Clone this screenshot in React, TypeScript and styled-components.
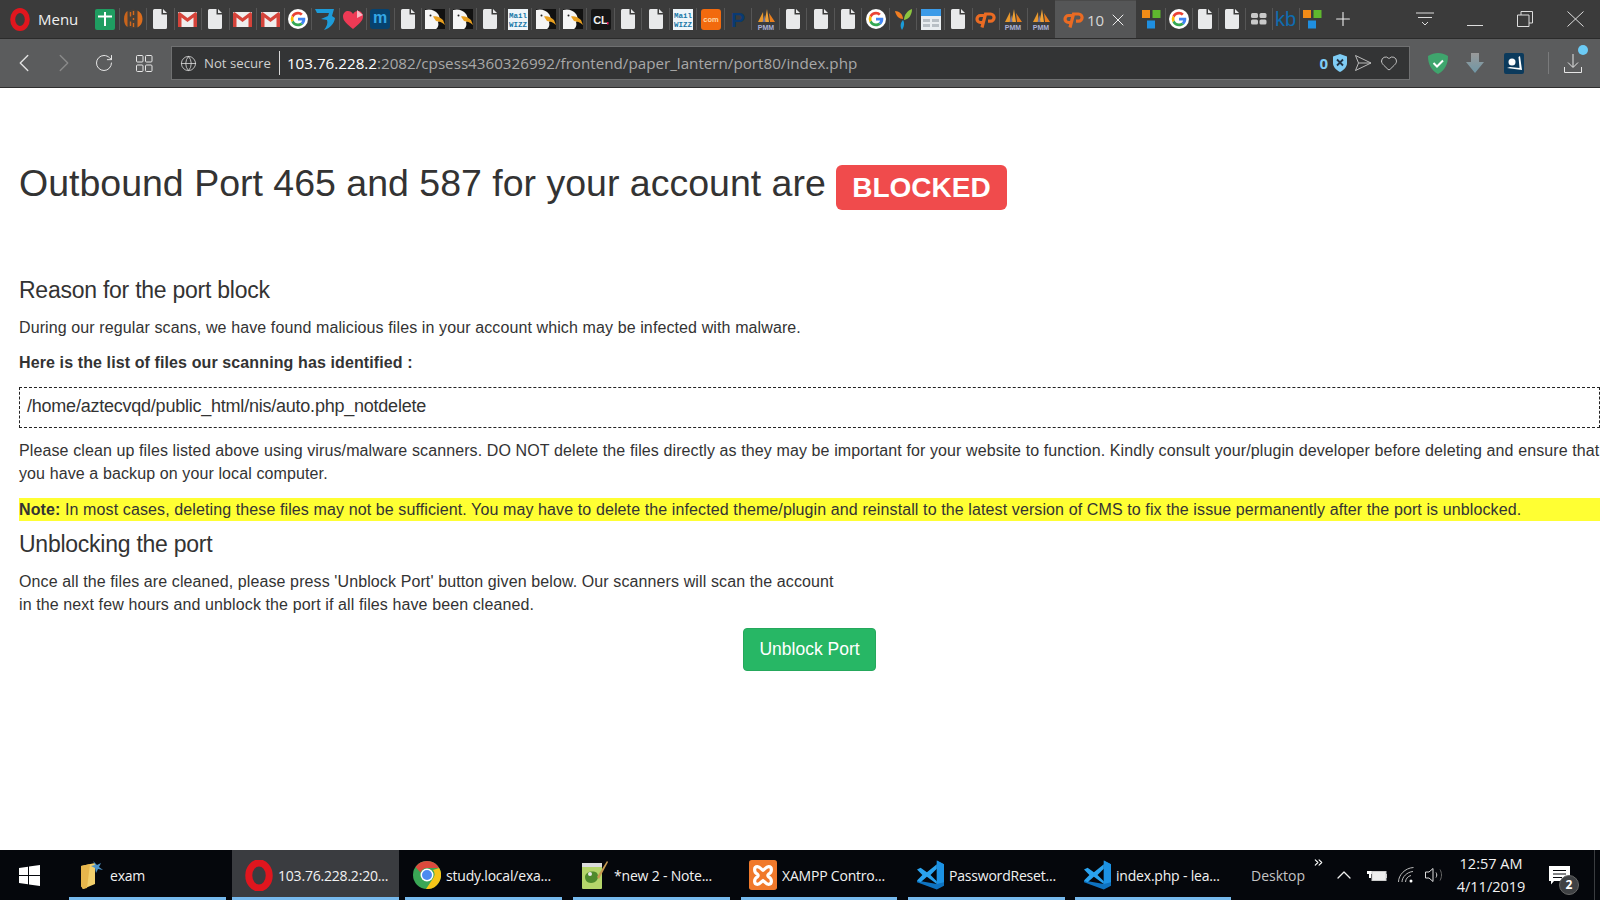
import * as React from 'react';
import styled, { createGlobalStyle } from 'styled-components';
import { ChevronLeft, ChevronRight, RotateCw, Globe, Heart, Plus, X, ChevronUp, ChevronsRight } from 'lucide-react';

type Fav =
  | 'plus' | 'orangeBars' | 'doc' | 'gmail' | 'google' | 'three' | 'heart' | 'm' | 'bird' | 'wizz'
  | 'cl' | 'com' | 'paypal' | 'pmm' | 'leaf' | 'calendar' | 'cpanel' | 'squares' | 'grid' | 'kb';

const leftBookmarks: Fav[] = [
  'plus', 'orangeBars', 'doc', 'gmail', 'doc', 'gmail', 'gmail', 'google', 'three', 'heart', 'm', 'doc', 'bird', 'bird',
  'doc', 'wizz', 'bird', 'bird', 'cl', 'doc', 'doc', 'wizz', 'com', 'paypal', 'pmm', 'doc', 'doc', 'doc', 'google',
  'leaf', 'calendar', 'doc', 'cpanel', 'pmm', 'pmm',
];
const rightBookmarks: Fav[] = ['squares', 'google', 'doc', 'doc', 'grid', 'kb', 'squares'];

const FavIcon = ({ kind }: { kind: Fav }) => {
  switch (kind) {
    case 'plus':
      return (
        <svg width="20" height="21" viewBox="0 0 20 21">
          <rect width="20" height="21" rx="2" fill="#1f9d61" />
          <path d="M3 7.5h14M10 3v14" stroke="#fff" strokeWidth="2" />
        </svg>
      );
    case 'orangeBars':
      return (
        <svg width="20" height="20" viewBox="0 0 20 20" fill="none">
          <ellipse cx="10" cy="10" rx="9" ry="9.500" fill="#4b4036" />
          <path d="M1 10C1 6 2.500 3 4.500 2V18C2.500 17 1 14 1 10Z" fill="#c9641c" />
          <path d="M14.500 1.500C17.500 3 19.500 6 19.500 10C19.500 14 17.500 17 14.500 18.500Z" fill="#dc6d1c" />
          <path d="M7.500 3V7.500M7.500 12.500V17M10.500 2V6M10.500 9V11M10.500 14V18" stroke="#d4691d" strokeWidth="1.400" />
        </svg>
      );
    case 'doc':
      return (
        <svg width="14" height="20" viewBox="0 0 14 20">
          <path d="M1.5 0H8.5V5.5H14V18.5A1.5 1.5 0 0 1 12.500 20H1.500A1.500 1.500 0 0 1 0 18.500V1.500A1.500 1.500 0 0 1 1.500 0ZM10 0L14 4H10Z" fill="#e8e9ea" />
        </svg>
      );
    case 'gmail':
      return (
        <svg width="19" height="15" viewBox="0 0 19 15">
          <rect width="19" height="15" rx="1" fill="#eeeeee" />
          <path d="M0 1.500V15H3.500V5.500L9.500 10L15.500 5.500V15H19V1.500L17.500 0L9.500 6L1.500 0Z" fill="#d5433a" />
        </svg>
      );
    case 'google':
      return (
        <svg width="20" height="20" viewBox="0 0 48 48">
          <circle cx="24" cy="24" r="24" fill="#fff" />
          <path fill="#ea4335" d="M24 13c3 0 5.300 1.100 7 2.700l4.500-4.500C32.500 8.500 28.700 6.500 24 6.500c-6.800 0-12.700 3.900-15.600 9.600l5.300 4.100C15 16 19.100 13 24 13z" />
          <path fill="#4285f4" d="M41.500 24.500c0-1.300-.1-2.500-.3-3.500H24v6.800h9.900c-.4 2.200-1.700 4.100-3.600 5.400l5.500 4.300c3.300-3 5.700-7.500 5.700-13z" />
          <path fill="#fbbc05" d="M13.700 27.800A10.500 10.500 0 0 1 13.700 20.200l-5.300-4.100a17.500 17.500 0 0 0 0 15.800z" />
          <path fill="#34a853" d="M24 41.500c4.700 0 8.700-1.500 11.800-4.300l-5.500-4.300c-1.600 1-3.700 1.700-6.300 1.700-4.900 0-9-3-10.300-7.200l-5.300 4.100c2.900 5.800 8.800 10 15.600 10z" />
        </svg>
      );
    case 'three':
      return (
        <svg width="20" height="21" viewBox="0 0 20 21">
          <path d="M0 0H19L17 7L20 9C19 15 15 19 9 21C12 17 13 14 12 11L6 10L13 7L14 4L2 4Z" fill="#1d9bd8" />
        </svg>
      );
    case 'heart':
      return (
        <svg width="20" height="19" viewBox="0 0 20 19">
          <path d="M10 19C4 14 0 11 0 6.500C0 3 2.500 1 5 1C7 1 9 2 10 4C11 2 13 1 15 1C17.500 1 20 3 20 6.500C20 11 16 14 10 19Z" fill="#ee3a55" />
          <path d="M14 0L20 5L14 8Z" fill="#f7b7c2" />
        </svg>
      );
    case 'm':
      return (
        <svg width="20" height="20" viewBox="0 0 20 20">
          <rect width="20" height="20" rx="3" fill="#07426e" />
          <text x="10" y="14" textAnchor="middle" fontFamily="Liberation Sans" fontWeight="700" fontSize="16" fill="#35a8e6">m</text>
        </svg>
      );
    case 'bird':
      return (
        <svg width="20" height="20" viewBox="0 0 20 20">
          <rect width="20" height="20" fill="#111" />
          <path d="M0 1C5 -0.500 10 1 13 5C15 8 15 11 13 13C14 16 13 19 11 20H0Z" fill="#f5f5f5" />
          <path d="M8 7.500C11 6.500 15 8 18 11L20 16C17 13 14 12.500 11 12Z" fill="#e8a020" />
          <circle cx="5.500" cy="6.500" r="1" fill="#222" />
        </svg>
      );
    case 'wizz':
      return (
        <svg width="20" height="21" viewBox="0 0 20 21">
          <rect width="20" height="21" fill="#eef5f9" />
          <text x="10" y="8.500" textAnchor="middle" fontFamily="Liberation Mono" fontWeight="700" fontSize="7.500" fill="#1878a8">Mail</text>
          <text x="10" y="18" textAnchor="middle" fontFamily="Liberation Mono" fontWeight="700" fontSize="7.500" fill="#1878a8">WIZZ</text>
        </svg>
      );
    case 'cl':
      return (
        <svg width="20" height="21" viewBox="0 0 20 21">
          <rect width="20" height="21" rx="2" fill="#151515" />
          <text x="9.500" y="15" textAnchor="middle" fontFamily="Liberation Sans" fontWeight="700" fontSize="11" fill="#f0f0f0">CL</text>
          <rect x="16" y="13" width="1.500" height="2.500" fill="#e8175d" />
        </svg>
      );
    case 'com':
      return (
        <svg width="20" height="21" viewBox="0 0 20 21">
          <rect width="20" height="21" rx="3" fill="#f26a0e" />
          <text x="10" y="13" textAnchor="middle" fontFamily="Liberation Sans" fontWeight="700" fontSize="7.500" fill="#ffd9a8">com</text>
        </svg>
      );
    case 'paypal':
      return (
        <svg width="18" height="26" viewBox="0 0 18 26">
          <text x="9" y="20.500" textAnchor="middle" fontFamily="Liberation Sans" fontWeight="700" fontSize="21" fill="#0a3a72">P</text>
        </svg>
      );
    case 'pmm':
      return (
        <svg width="20" height="21" viewBox="0 0 20 21">
          <path d="M2 13L7 3L7.500 13Z" fill="#e8982c" />
          <path d="M8.500 13L11 0L13 13Z" fill="#f0a236" />
          <path d="M14 13L13 4L19 13Z" fill="#ea7e1c" />
          <path d="M6.500 13L8.500 6L9.500 13Z" fill="#6f729a" />
          <text x="10" y="20.500" textAnchor="middle" fontFamily="Liberation Sans" fontWeight="700" fontSize="7" fill="#aab0d4">PMM</text>
        </svg>
      );
    case 'leaf':
      return (
        <svg width="17" height="21" viewBox="0 0 17 21">
          <path d="M0 2C4 2 8 5 8 10C4 10 1 7 0 2Z" fill="#ef7d22" />
          <path d="M17 0C17 6 14 10 9 11C9 6 12 2 17 0Z" fill="#8cc63f" />
          <path d="M8 11C10 14 9 18 7 21C5 18 5 14 8 11Z" fill="#1b9bd7" />
        </svg>
      );
    case 'calendar':
      return (
        <svg width="20" height="21" viewBox="0 0 20 21">
          <rect width="20" height="21" fill="#e9edf0" />
          <rect width="20" height="7" fill="#3b9be8" />
          <path d="M2 10h7v3H2zM11 10h7v3h-7zM2 15h7v3H2zM11 15h7v3h-7z" fill="#b8bfc5" />
        </svg>
      );
    case 'cpanel':
      return (
        <svg width="21" height="17" viewBox="0 0 21 17" fill="none" stroke="#ea6b23" strokeWidth="3.200">
          <path d="M9 4.500H5.500A3.500 3.500 0 0 0 5.500 11.500H7.500" />
          <path d="M7 16.500L10.500 3H15.500A3.600 3.600 0 0 1 15.500 10.200H13" />
        </svg>
      );
    case 'squares':
      return (
        <svg width="19" height="19" viewBox="0 0 19 19">
          <rect width="8" height="8" fill="#f28c17" />
          <rect x="10.500" width="8" height="8" fill="#5fb82e" />
          <rect x="5" y="10.500" width="8" height="8" fill="#1f8fe0" />
        </svg>
      );
    case 'grid':
      return (
        <svg width="16" height="12" viewBox="0 0 16 12">
          <rect width="7" height="5" rx="1.500" fill="#c9c9c9" />
          <rect x="8.500" width="7" height="5" rx="1.500" fill="#c9c9c9" />
          <rect y="6.500" width="7" height="5" rx="1.500" fill="#c9c9c9" />
          <rect x="8.500" y="6.500" width="7" height="5" rx="1.500" fill="#c9c9c9" />
        </svg>
      );
    case 'kb':
      return (
        <svg width="21" height="20" viewBox="0 0 21 20">
          <text x="10.500" y="17" textAnchor="middle" fontFamily="Liberation Sans" fontSize="20" fill="#0f6cb0">kb</text>
        </svg>
      );
  }
};

const OperaIcon = ({ size, w }: { size: number; w: number }) => (
  <svg width={w} height={size} viewBox="0 0 20 22">
    <ellipse cx="10" cy="11" rx="7.300" ry="9" fill="none" stroke="#e0161e" strokeWidth="5" />
  </svg>
);

const WindowsIcon = () => (
  <svg width="21" height="21" viewBox="0 0 21 21">
    <path d="M0 3L9 1.700V10H0ZM10 1.500L21 0V10H10ZM0 11H9V19.300L0 18ZM10 11H21V21L10 19.500Z" fill="#fff" />
  </svg>
);

const FolderIcon = () => (
  <svg width="26" height="30" viewBox="0 0 26 30">
    <path d="M3 6L17 3V24L5 29L3 26Z" fill="#f3cf6b" />
    <path d="M3 6L12 4L9 28L5 29L3 26Z" fill="#e7b64c" />
    <path d="M15 1L19 5L23 3L21 7L25 10L20 9L18 13L17 8L13 6L17 5Z" fill="#4d94c9" />
  </svg>
);

const ChromeIcon = () => (
  <svg width="28" height="28" viewBox="0 0 28 28">
    <circle cx="14" cy="14" r="14" fill="#3aa655" />
    <path d="M14 0A14 14 0 0 1 26.100 7H14A7 7 0 0 0 7.500 11.500L2.500 6A14 14 0 0 1 14 0Z" fill="#dc4a3d" />
    <path d="M26.100 7A14 14 0 0 1 13 28L20 17.500A7 7 0 0 0 20 9Z" fill="#f5c518" />
    <circle cx="14" cy="14" r="6.500" fill="#fff" />
    <circle cx="14" cy="14" r="5" fill="#4c8bf0" />
  </svg>
);

const NotepadIcon = () => (
  <svg width="28" height="30" viewBox="0 0 28 30">
    <rect x="1" y="5" width="20" height="24" rx="1" fill="#b5d56a" />
    <rect x="1" y="3" width="20" height="4" fill="#dcdcdc" />
    <path d="M4 17C4 12 12 10 16 13C19 18 15 23 10 23C6 23 4 20 4 17Z" fill="#4f8a2c" />
    <circle cx="9" cy="14" r="2" fill="#e8e8e8" />
    <path d="M16 17L26 1L27 2L18 19Z" fill="#c79a52" />
  </svg>
);

const XamppIcon = () => (
  <svg width="29" height="32" viewBox="0 0 30 32">
    <rect width="30" height="32" rx="3" fill="#f0792b" />
    <path d="M9 7C12 7 13 10 15 11C17 10 18 7 21 7C25 7 25 13 21 15C20 16 20 17 21 18C25 20 25 26 21 26C18 26 17 23 15 22C13 23 12 26 9 26C5 26 5 20 9 18C10 17 10 16 9 15C5 13 5 7 9 7Z" fill="none" stroke="#fff" strokeWidth="3.400" />
  </svg>
);

const VSCodeIcon = () => (
  <svg width="27" height="32" viewBox="0 0 30 32">
    <path d="M22 0L30 4V28L22 32L0 24V22L22 26Z" fill="#0e72bf" />
    <path d="M22 0V26L30 24V4Z" fill="#1c92e4" />
    <path d="M0 10L4 8L11 13L22 4V9L15 16L22 23V26L11 18L4 24L0 22L6 16Z" fill="#2aa3ef" />
  </svg>
);

const App = () => (
  <Screen>
    <GlobalStyle />
    <TabStrip>
      <MenuButton>
        <OperaIcon w={20} size={23} />
        <span>Menu</span>
      </MenuButton>
      <Bookmarks>
        {leftBookmarks.map((f, i) => (
          <Bookmark key={i}>
            <FavIcon kind={f} />
          </Bookmark>
        ))}
      </Bookmarks>
      <ActiveTab>
        <FavIcon kind="cpanel" />
        <TabCount>10</TabCount>
        <X size={20} strokeWidth={1.2} color="#eee" />
      </ActiveTab>
      <RightBookmarks>
        {rightBookmarks.map((f, i) => (
          <Bookmark key={i} $narrow>
            <FavIcon kind={f} />
          </Bookmark>
        ))}
      </RightBookmarks>
      <NewTab>
        <Plus size={22} strokeWidth={1.2} color="#eee" />
      </NewTab>
      <WindowControls>
        <WindowButton>
          <svg width="18" height="15" viewBox="0 0 18 15" fill="none" stroke="#ddd" strokeWidth="1">
            <path d="M0 1H18M2 5.500H16M6 10L9 13L12 10" />
          </svg>
        </WindowButton>
        <WindowButton>
          <svg width="16" height="14" viewBox="0 0 16 14" fill="none" stroke="#ddd" strokeWidth="1">
            <path d="M0 13.500H16" />
          </svg>
        </WindowButton>
        <WindowButton>
          <svg width="16" height="16" viewBox="0 0 16 16" fill="none" stroke="#ddd" strokeWidth="1">
            <path d="M4 4V.500H15.500V12H12M.500 4H12V15.500H.500Z" />
          </svg>
        </WindowButton>
        <WindowButton>
          <svg width="17" height="16" viewBox="0 0 17 16" fill="none" stroke="#ddd" strokeWidth="1">
            <path d="M.500 .500L16.500 15.500M16.500 .500L.500 15.500" />
          </svg>
        </WindowButton>
      </WindowControls>
    </TabStrip>

    <AddressRow>
      <NavButton>
        <ChevronLeft size={30} strokeWidth={1.1} color="#e2e2e2" />
      </NavButton>
      <NavButton>
        <ChevronRight size={30} strokeWidth={1.1} color="#8a8a8a" />
      </NavButton>
      <NavButton>
        <RotateCw size={20} strokeWidth={1.2} color="#e6e6e6" />
      </NavButton>
      <NavButton>
        <svg width="17" height="17" viewBox="0 0 17 17" fill="none" stroke="#e6e6e6" strokeWidth="1">
          <rect x=".5" y=".5" width="6.500" height="6.500" rx="1" />
          <rect x="9.500" y=".5" width="6.500" height="6.500" rx="1" />
          <rect x=".5" y="10" width="6.500" height="6.500" rx="1" />
          <rect x="9.500" y="10" width="6.500" height="6.500" rx="1" />
        </svg>
      </NavButton>
      <AddressBar>
        <Globe size={17} strokeWidth={1.1} color="#e0e0e0" />
        <NotSecure>Not secure</NotSecure>
        <UrlText>
          <b>103.76.228.2</b>:2082/cpsess4360326992/frontend/paper_lantern/port80/index.php
        </UrlText>
        <BlockCount>0</BlockCount>
        <svg width="14" height="18" viewBox="0 0 14 18">
          <path d="M7 0L14 2.500V9C14 13 11 16 7 18C3 16 0 13 0 9V2.500Z" fill="#7fcdf5" />
          <path d="M4 5.500L10 11.500M10 5.500L4 11.500" stroke="#234" strokeWidth="1.800" />
        </svg>
        <SendIcon width="17" height="16" viewBox="0 0 17 16" fill="none" stroke="#bbb" strokeWidth="1">
          <path d="M.500 .500L16 8L.500 15.500L3.500 8ZM3.500 8H16" />
        </SendIcon>
        <Heart size={18} strokeWidth={1.1} color="#ddd" />
      </AddressBar>
      <Extensions>
        <svg width="20" height="21" viewBox="0 0 20 21">
          <path d="M10 0C13 0 17 1 20 3C20 11 17 17 10 21C3 17 0 11 0 3C3 1 7 0 10 0Z" fill="#3fa56d" />
          <path d="M5.500 10L9 13.500L15 7.500" fill="none" stroke="#fff" strokeWidth="2" />
        </svg>
        <svg width="18" height="20" viewBox="0 0 18 20">
          <defs>
            <linearGradient id="arrowFade" x1="0" y1="0" x2="0" y2="1">
              <stop offset="0" stopColor="#9a9a9a" />
              <stop offset="1" stopColor="#6f97a6" />
            </linearGradient>
          </defs>
          <path d="M5 0H13V9H18L9 20L0 9H5Z" fill="url(#arrowFade)" />
        </svg>
        <BrandSquare width="20" height="21" viewBox="0 0 20 21">
          <rect width="20" height="21" rx="2" fill="#0b3a5c" />
          <path d="M16 3L18 17L3 15L6 14L15.500 15L14.500 4Z" fill="#fff" />
          <circle cx="8" cy="9" r="3.500" fill="#fff" />
        </BrandSquare>
        <ExtDivider />
        <DownloadSlot>
          <svg width="18" height="19" viewBox="0 0 18 19" fill="none" stroke="#e6e6e6" strokeWidth="1">
            <path d="M9 0V13M4 8.500L9 13.500L14 8.500M.500 13V18.500H17.500V13" />
          </svg>
          <DownloadDot />
        </DownloadSlot>
      </Extensions>
    </AddressRow>

    <Page>
      <Title>
        Outbound Port 465 and 587 for your account are <BlockedLabel>BLOCKED</BlockedLabel>
      </Title>
      <SectionHeading>Reason for the port block</SectionHeading>
      <Para>During our regular scans, we have found malicious files in your account which may be infected with malware.</Para>
      <Para>
        <strong>Here is the list of files our scanning has identified :</strong>
      </Para>
      <FileBox>/home/aztecvqd/public_html/nis/auto.php_notdelete</FileBox>
      <Para>
        Please clean up files listed above using virus/malware scanners. DO NOT delete the files directly as they may be
        important for your website to function. Kindly consult your/plugin developer before deleting and ensure that you
        have a backup on your local computer.
      </Para>
      <NoteLine>
        <strong>Note:</strong> In most cases, deleting these files may not be sufficient. You may have to delete the
        infected theme/plugin and reinstall to the latest version of CMS to fix the issue permanently after the port is
        unblocked.
      </NoteLine>
      <SecondHeading>Unblocking the port</SecondHeading>
      <Para>
        Once all the files are cleaned, please press 'Unblock Port' button given below. Our scanners will scan the account
        <br />
        in the next few hours and unblock the port if all files have been cleaned.
      </Para>
      <ButtonRow>
        <UnblockButton>Unblock Port</UnblockButton>
      </ButtonRow>
    </Page>

    <Taskbar>
      <StartButton>
        <WindowsIcon />
      </StartButton>
      <TaskItem $width={157} $gap={6}>
        <TaskIcon>
          <FolderIcon />
        </TaskIcon>
        <span>exam</span>
      </TaskItem>
      <TaskItem $width={167} $gap={6} $active>
        <TaskIcon>
          <OperaIcon w={29} size={31} />
        </TaskIcon>
        <span>103.76.228.2:20...</span>
      </TaskItem>
      <TaskItem $width={157} $gap={11}>
        <TaskIcon>
          <ChromeIcon />
        </TaskIcon>
        <span>study.local/exa...</span>
      </TaskItem>
      <TaskItem $width={157} $gap={11}>
        <TaskIcon>
          <NotepadIcon />
        </TaskIcon>
        <span>*new 2 - Note...</span>
      </TaskItem>
      <TaskItem $width={156} $gap={11}>
        <TaskIcon>
          <XamppIcon />
        </TaskIcon>
        <span>XAMPP Contro...</span>
      </TaskItem>
      <TaskItem $width={157} $gap={10}>
        <TaskIcon>
          <VSCodeIcon />
        </TaskIcon>
        <span>PasswordReset...</span>
      </TaskItem>
      <TaskItem $width={156} $gap={0}>
        <TaskIcon>
          <VSCodeIcon />
        </TaskIcon>
        <span>index.php - lea...</span>
      </TaskItem>
      <DesktopLabel>Desktop</DesktopLabel>
      <ToolbarChevrons>
        <ChevronsRight size={13} strokeWidth={2} color="#fff" />
      </ToolbarChevrons>
      <Tray>
        <ChevronUp size={24} strokeWidth={1.3} color="#f0f0f0" />
        <svg width="20" height="14" viewBox="0 0 20 14">
          <path d="M1 0H5M2 0V3M4 0V3M0 3H6V6H4V10H2V6H0Z" fill="#fff" />
          <rect x="5" y="3.500" width="14" height="9" fill="#eee" stroke="#ccc" strokeWidth="1" />
          <rect x="19" y="6" width="1.500" height="4" fill="#ccc" />
        </svg>
        <svg width="16" height="16" viewBox="0 0 16 16" fill="none" stroke="#bbb" strokeWidth="1">
          <path d="M.500 15C.500 8 7 1 15.500 .500M4 15C4 10 9 5 15 4.500M7.500 15C7.500 12 10 9 13 8.500" />
          <circle cx="13" cy="14" r="1.500" fill="#fff" stroke="none" />
        </svg>
        <svg width="20" height="16" viewBox="0 0 20 16" fill="none" stroke="#ddd" strokeWidth="1">
          <path d="M.500 5H4L8 1.500V14.500L4 11H.500Z" />
          <path d="M11 5.500C12 7 12 9 11 10.500" stroke="#ccc" />
          <path d="M15 2.500C17 6 17 10 15 13.500" stroke="#666" />
        </svg>
      </Tray>
      <Clock>
        <span>12:57 AM</span>
        <span>4/11/2019</span>
      </Clock>
      <Notifications>
        <svg width="21" height="19" viewBox="0 0 21 19">
          <path d="M0 0H21V15H5L2 18.500V15H0Z" fill="#fff" />
          <path d="M4 4.500H17M4 8H17M4 11.500H13" stroke="#05070c" strokeWidth="1" />
        </svg>
        <NotifyBadge>2</NotifyBadge>
      </Notifications>
      <PeekLine />
    </Taskbar>
  </Screen>
);

export default App;

const GlobalStyle = createGlobalStyle`
  html, body {
    margin: 0;
    padding: 0;
    background: #fff;
  }
  * {
    box-sizing: border-box;
  }
`;

const Screen = styled.div`
  width: 1600px;
  height: 900px;
  display: flex;
  flex-direction: column;
  overflow: hidden;
  font-family: 'Liberation Sans', Arial, sans-serif;
`;

const TabStrip = styled.div`
  height: 39px;
  flex: none;
  display: flex;
  align-items: stretch;
  background: #3b3b3b;
  border-bottom: 1px solid #2b2b2b;
`;

const MenuButton = styled.div`
  width: 91px;
  flex: none;
  display: flex;
  align-items: center;
  gap: 8px;
  padding-left: 10px;
  font-family: 'Open Sans', sans-serif;
  font-size: 15px;
  color: #f0f0f0;
`;

const Bookmarks = styled.div`
  display: flex;
  align-items: center;
  flex: none;
  width: 964px;
`;

const RightBookmarks = styled.div`
  display: flex;
  align-items: center;
  flex: none;
  margin-left: 2px;
`;

const Bookmark = styled.div<{ $narrow?: boolean }>`
  width: ${p => (p.$narrow ? '26.8px' : '27.53px')};
  height: 22px;
  flex: none;
  display: flex;
  align-items: center;
  justify-content: center;
  border-left: 1px solid #565656;
  &:first-child {
    border-left: none;
  }
`;

const ActiveTab = styled.div`
  width: 81px;
  flex: none;
  display: flex;
  align-items: center;
  padding-left: 8px;
  background: #555657;
  border-top: 1px solid #4a4a4a;
`;

const TabCount = styled.span`
  font-family: 'Open Sans', sans-serif;
  font-size: 15px;
  color: #d8d8d8;
  margin: 0 4px 0 3px;
`;

const NewTab = styled.div`
  width: 32px;
  flex: none;
  display: flex;
  align-items: center;
  justify-content: center;
  margin-left: 1px;
`;

const WindowControls = styled.div`
  margin-left: auto;
  display: flex;
  align-items: center;
  padding-right: 0;
`;

const WindowButton = styled.div`
  width: 50px;
  height: 100%;
  display: flex;
  align-items: center;
  justify-content: center;
`;

const AddressRow = styled.div`
  height: 49px;
  flex: none;
  display: flex;
  align-items: center;
  padding-left: 4px;
  background: #5b5c5d;
  border-bottom: 1px solid #2e2e2e;
`;

const NavButton = styled.div`
  width: 40px;
  height: 34px;
  flex: none;
  display: flex;
  align-items: center;
  justify-content: center;
`;

const AddressBar = styled.div`
  width: 1239px;
  height: 34px;
  flex: none;
  margin-left: 7px;
  display: flex;
  align-items: center;
  padding: 0 11px 0 8px;
  background: #333435;
  border: 1px solid #6f7071;
`;

const NotSecure = styled.span`
  font-family: 'Open Sans', sans-serif;
  font-size: 13.200px;
  color: #d0d0d0;
  margin-left: 7px;
  padding-right: 8px;
  border-right: 1px solid #d8d8d8;
  line-height: 24px;
`;

const UrlText = styled.span`
  font-family: 'Open Sans', sans-serif;
  font-size: 15.200px;
  color: #a8a8a8;
  margin-left: 7px;
  flex: 1;
  b {
    font-weight: 400;
    color: #fff;
  }
`;

const BlockCount = styled.span`
  font-family: 'Open Sans', sans-serif;
  font-size: 15px;
  font-weight: 700;
  color: #7fcdf5;
  margin-right: 5px;
`;

const SendIcon = styled.svg`
  margin: 0 8px 0 8px;
`;

const Extensions = styled.div`
  flex: 1;
  display: flex;
  align-items: center;
  padding-left: 18px;
  gap: 18px;
`;

const BrandSquare = styled.svg`
  margin-left: 2px;
`;

const ExtDivider = styled.div`
  width: 1px;
  height: 22px;
  background: #7a7b7c;
  margin-left: 6px;
`;

const DownloadSlot = styled.div`
  position: relative;
  display: flex;
  margin-left: -3px;
`;

const DownloadDot = styled.div`
  position: absolute;
  top: -9px;
  right: -6px;
  width: 10px;
  height: 10px;
  border-radius: 50%;
  background: #6ccbf5;
`;

const Page = styled.main`
  flex: 1;
  min-height: 0;
  padding: 0 0 0 19px;
  background: #fff;
  color: #333;
  font-size: 16px;
  line-height: 23px;
  letter-spacing: 0.11px;
`;

const Title = styled.h1`
  margin: 75px 0 0;
  font-size: 37.500px;
  font-weight: 400;
  line-height: 40px;
  letter-spacing: 0;
  color: #333;
  white-space: nowrap;
`;

const BlockedLabel = styled.span`
  display: inline-block;
  vertical-align: top;
  margin: 2px 0 0 0;
  padding: 0 16px;
  height: 45px;
  line-height: 45px;
  border-radius: 6px;
  background: #f04b4c;
  color: #fff;
  font-size: 28px;
  font-weight: 700;
`;

const SectionHeading = styled.h3`
  margin: 65px 0 0;
  font-size: 23px;
  font-weight: 400;
  line-height: 30px;
  letter-spacing: -0.25px;
`;

const SecondHeading = styled(SectionHeading)`
  margin: 8px 0 11px;
`;

const Para = styled.p`
  margin: 11px 0 12px;
`;

const FileBox = styled.div`
  height: 41px;
  margin: 13px 0 11px;
  padding-left: 7px;
  border: 1px dashed #222;
  font-size: 18px;
  line-height: 37px;
  letter-spacing: -0.23px;
`;

const NoteLine = styled.p`
  margin: 13px 0 0;
  background: #ffff33;
  white-space: nowrap;
`;

const ButtonRow = styled.div`
  display: flex;
  justify-content: center;
  margin-top: 12px;
`;

const UnblockButton = styled.button`
  width: 133px;
  height: 43px;
  padding: 0;
  border: 1px solid #25a85c;
  border-radius: 4px;
  background: #27b765;
  color: #fff;
  font-family: inherit;
  font-size: 17.500px;
`;

const Taskbar = styled.footer`
  height: 50px;
  flex: none;
  display: flex;
  align-items: stretch;
  position: relative;
  background: #05070c;
  color: #f2f2f2;
  font-family: 'Open Sans', sans-serif;
  font-size: 14px;
`;

const StartButton = styled.div`
  width: 69px;
  flex: none;
  display: flex;
  align-items: center;
  padding-left: 19px;
`;

const TaskIcon = styled.div`
  width: 28px;
  flex: none;
  display: flex;
  justify-content: center;
`;

const TaskItem = styled.div<{ $width: number; $gap: number; $active?: boolean }>`
  width: ${p => p.$width}px;
  margin-right: ${p => p.$gap}px;
  flex: none;
  display: flex;
  align-items: center;
  gap: 5px;
  padding: 3px 0 0 ${p => (p.$active ? 13 : 8)}px;
  background: ${p => (p.$active ? '#3a3c40' : 'transparent')};
  border-bottom: 3px solid #76b9ed;
  white-space: nowrap;
  letter-spacing: -0.2px;
`;

const DesktopLabel = styled.div`
  margin-left: 20px;
  display: flex;
  align-items: center;
  color: #c4c4c4;
`;

const ToolbarChevrons = styled.div`
  margin: 4px 0 0 7px;
`;

const Tray = styled.div`
  display: flex;
  align-items: center;
  gap: 11px;
  margin-left: 7px;
`;

const Clock = styled.div`
  width: 80px;
  margin-left: 6px;
  display: flex;
  flex-direction: column;
  align-items: center;
  justify-content: center;
  gap: 1px;
  font-size: 14.500px;
  line-height: 22px;
  white-space: nowrap;
`;

const Notifications = styled.div`
  position: relative;
  display: flex;
  align-items: center;
  margin-left: 18px;
`;

const NotifyBadge = styled.div`
  position: absolute;
  top: 25px;
  left: 10px;
  width: 20px;
  height: 20px;
  border-radius: 50%;
  background: #3f4144;
  border: 1px solid #666;
  color: #fff;
  font-size: 12px;
  font-weight: 700;
  line-height: 18px;
  text-align: center;
`;

const PeekLine = styled.div`
  position: absolute;
  top: 0;
  right: 5px;
  width: 1px;
  height: 100%;
  background: #3a3c40;
`;
